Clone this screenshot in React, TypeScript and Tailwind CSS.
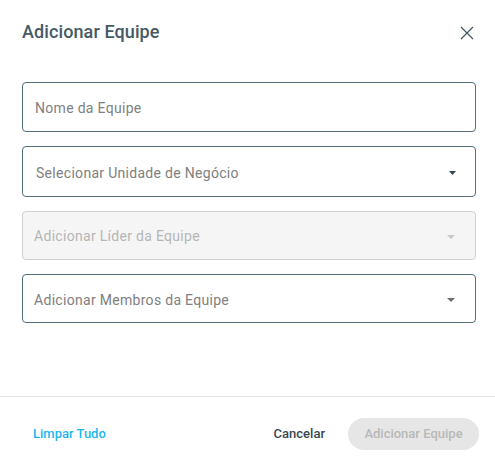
import React from "react";

function Caret({ color, w = 8 }: { color: string; w?: number }) {
  return (
    <svg width={w} height="4" viewBox={`0 0 ${w} 4`} className="shrink-0">
      <path d={`M0 0 L${w} 0 L${w / 2} 4 Z`} fill={color} />
    </svg>
  );
}

export default function App() {
  return (
    <div
      className="w-[495px] h-[467px] bg-white flex flex-col"
      style={{ fontFamily: "Roboto, 'Liberation Sans', sans-serif" }}
    >
      <div className="flex items-center justify-between pl-[22px] pr-[21px] pt-[19px] h-[45px]">
        <h1 className="text-[18px] font-medium text-[#455a64] leading-none tracking-[0.1px]">Adicionar Equipe</h1>
        <svg width="14" height="14" viewBox="0 0 14 14" className="mt-[2px]">
          <path d="M1 1 L13 13 M13 1 L1 13" stroke="#455a64" strokeWidth="1.3" fill="none" />
        </svg>
      </div>

      <div className="flex flex-col gap-[14px] pl-[22px] pr-[19px] pt-[37px]">
        <div className="h-[50px] border border-[#546e7a] rounded-[4px] flex items-center pl-[12px] pt-[3px]">
          <span className="text-[14px] text-[#808080] tracking-[0.3px]">Nome da Equipe</span>
        </div>
        <div className="h-[51px] border border-[#546e7a] rounded-[4px] flex items-center justify-between pl-[13px] pr-[19px] pt-[3px]">
          <span className="text-[14px] text-[#808080] tracking-[0.3px]">Selecionar Unidade de Negócio</span>
          <Caret color="#37474f" w={7} />
        </div>
        <div className="h-[49px] border border-[#d0d0d0] bg-[#f5f5f5] rounded-[4px] flex items-center justify-between pl-[11px] pr-[20px] pt-[2px]">
          <span className="text-[14px] text-[#b5b5b5] tracking-[0.3px]">Adicionar Líder da Equipe</span>
          <Caret color="#c8c8c8" />
        </div>
        <div className="h-[49px] border border-[#546e7a] rounded-[4px] flex items-center justify-between pl-[11px] pr-[20px] pt-[3px]">
          <span className="text-[14px] text-[#808080] tracking-[0.3px]">Adicionar Membros da Equipe</span>
          <Caret color="#6b6b6b" />
        </div>
      </div>

      <div className="mt-[73px] border-t border-[#e5e5e5]" />

      <div className="flex items-center justify-between pl-[33px] pr-[16px] pt-[21px]">
        <span className="text-[13px] font-medium text-[#1eb6ee]">Limpar Tudo</span>
        <div className="flex items-center gap-[23px]">
          <span className="text-[13px] font-medium text-[#37474f]">Cancelar</span>
          <button className="h-[32px] w-[131px] rounded-full bg-[#e6e6e6] text-[13px] font-medium text-[#b8b8b8]">
            Adicionar Equipe
          </button>
        </div>
      </div>
    </div>
  );
}
